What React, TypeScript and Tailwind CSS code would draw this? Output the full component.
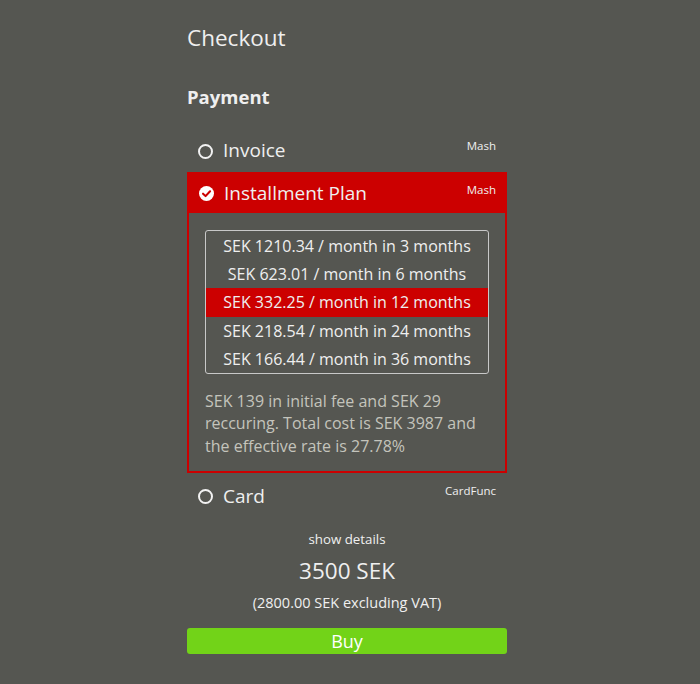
import React from "react";

const plans = [
  "SEK 1210.34 / month in 3 months",
  "SEK 623.01 / month in 6 months",
  "SEK 332.25 / month in 12 months",
  "SEK 218.54 / month in 24 months",
  "SEK 166.44 / month in 36 months",
];

function Radio() {
  return <span className="block w-[15px] h-[15px] rounded-full border-2 border-[#f2f2f2] shrink-0" />;
}

function Check() {
  return (
    <svg width="15" height="15" viewBox="0 0 16 16" className="shrink-0">
      <circle cx="8" cy="8" r="8" fill="#ffffff" />
      <path d="M4.3 8.2 L7 10.8 L11.8 5.6" stroke="#cc0000" strokeWidth="2.2" fill="none" strokeLinecap="round" strokeLinejoin="round" />
    </svg>
  );
}

export default function App() {
  return (
    <div className="min-h-[684px] bg-[#555651] text-[#efefef]" style={{ fontFamily: '"Open Sans", sans-serif' }}>
      <div className="ml-[187px] w-[320px] pt-[22px]">
        <h1 className="text-[22.5px] leading-[32px] font-normal">Checkout</h1>
        <h2 className="mt-[30px] text-[18.5px] leading-[26px] font-bold">Payment</h2>
        <div className="mt-[20px] relative flex items-center h-[42px] pl-[11px]">
          <Radio />
          <span className="ml-[10px] -mt-[2px] text-[19px] leading-[28px]">Invoice</span>
          <span className="absolute right-[11px] top-[9px] text-[11.5px] leading-[14px]">Mash</span>
        </div>
        <div className="border-2 border-[#cc0000]">
          <div className="relative flex items-center h-[39px] pl-[10px] bg-[#cc0000]">
            <Check />
            <span className="ml-[10px] -mt-[2px] text-[19px] leading-[28px]">Installment Plan</span>
            <span className="absolute right-[9px] top-[9px] text-[11.5px] leading-[14px]">Mash</span>
          </div>
          <div className="px-4 pt-[17px] pb-[14px]">
            <div className="border border-[#c8c8c8] rounded-[3px] overflow-hidden pt-[1px]">
              {plans.map((p, i) => (
                <div
                  key={p}
                  className={`h-[28.2px] flex items-center justify-center text-[16px] ${i === 2 ? "bg-[#cc0000]" : ""}`}
                >
                  {p}
                </div>
              ))}
            </div>
            <p className="mt-[16px] text-[16px] leading-[22.5px] text-[#c4c4bc]">
              SEK 139 in initial fee and SEK 29 reccuring. Total cost is SEK 3987 and the effective rate is 27.78%
            </p>
          </div>
        </div>
        <div className="relative flex items-center h-[47px] pl-[11px]">
          <Radio />
          <span className="ml-[10px] -mt-[2px] text-[19px] leading-[28px]">Card</span>
          <span className="absolute right-[11px] top-[11px] text-[11.5px] leading-[14px]">CardFunc</span>
        </div>
        <div className="flex flex-col items-center">
          <div className="mt-[10px] text-[13.3px] leading-[18px]">show details</div>
          <div className="mt-[8px] text-[22.5px] leading-[30px]">3500 SEK</div>
          <div className="mt-[7px] text-[14.5px] leading-[20px]">(2800.00 SEK excluding VAT)</div>
        </div>
        <button className="mt-[15px] w-full h-[26px] rounded-[3px] bg-[#72d318] text-white text-[18px] leading-[26px]">
          Buy
        </button>
      </div>
    </div>
  );
}
